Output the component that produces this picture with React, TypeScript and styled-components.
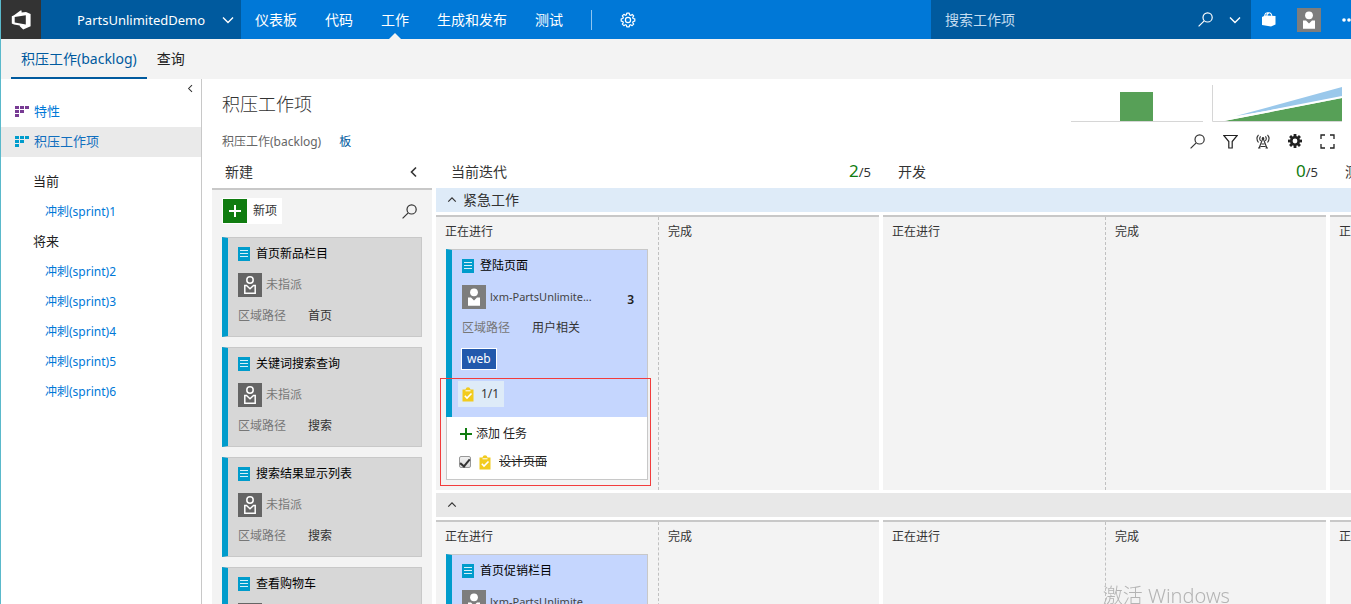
import React from 'react';
import styled, { createGlobalStyle } from 'styled-components';

const GlobalStyle = createGlobalStyle`
  * { box-sizing: border-box; }
  body {
    margin: 0;
    overflow: hidden;
    background: #fff;
    color: #333;
    font-family: "Noto Sans", "Noto Sans CJK SC", sans-serif;
    font-size: 12px;
    line-height: 16px;
  }
  button, input { font: inherit; color: inherit; }
  button { border: 0; padding: 0; background: none; cursor: pointer; text-align: left; }
  a { color: inherit; text-decoration: none; }
  h1, h2, h3, p, ul { margin: 0; padding: 0; font-weight: 400; font-size: inherit; }
  ul { list-style: none; }
  svg { display: block; flex: none; }
`;

const Page = styled.div`
  display: flex;
  flex-direction: column;
  height: 100vh;
  overflow: hidden;
  border-left: 1px solid #5ab9cb;
`;

/* ---------- top bar ---------- */

const TopBar = styled.header`
  display: flex;
  flex: none;
  height: 39px;
  background: #0078d7;
  color: #fff;
  font-size: 14px;
`;

const Logo = styled.a`
  display: flex;
  align-items: center;
  justify-content: center;
  width: 40px;
  background: #333;
`;

const ProjectButton = styled.button`
  display: flex;
  align-items: center;
  justify-content: space-between;
  width: 200px;
  padding: 0 7px 0 36px;
  background: #005a9e;
  font-size: 13px;
`;

const TopNav = styled.nav`
  display: flex;
  flex: 1;
  align-items: center;
`;

const TopLink = styled.a<{ $active?: boolean }>`
  position: relative;
  display: flex;
  align-items: center;
  height: 39px;
  padding: 0 14px;
  white-space: nowrap;
  &::after {
    content: "";
    display: ${p => (p.$active ? 'block' : 'none')};
    position: absolute;
    left: calc(50% - 6px);
    bottom: 0;
    border: 6px solid transparent;
    border-top: 0;
    border-bottom-color: #f3f3f3;
  }
`;

const Separator = styled.span`
  width: 1px;
  height: 20px;
  margin: 0 28px 0 14px;
  background: #8fc5f0;
`;

const SearchBox = styled.form`
  display: flex;
  align-items: center;
  gap: 16px;
  width: 320px;
  padding: 0 10px 0 14px;
  background: #005a9e;
`;

const SearchInput = styled.input`
  flex: 1;
  min-width: 0;
  padding: 0;
  border: 0;
  outline: 0;
  background: none;
  &::placeholder { color: #c3dcf0; opacity: 1; }
`;

const Account = styled.div`
  display: flex;
  align-items: center;
  gap: 21px;
  width: 100px;
  padding-left: 11px;
  overflow: hidden;
`;

/* ---------- hub tabs ---------- */

const HubBar = styled.nav`
  display: flex;
  flex: none;
  height: 40px;
  padding-left: 10px;
  background: #f3f3f3;
  font-size: 14px;
`;

const HubTab = styled.a<{ $active?: boolean }>`
  display: flex;
  align-items: center;
  padding: 2px 10px 0;
  border-bottom: 2px solid ${p => (p.$active ? '#005a9e' : 'transparent')};
  color: ${p => (p.$active ? '#005a9e' : '#222')};
`;

const Body = styled.div`
  display: flex;
  flex: 1;
  min-height: 0;
`;

/* ---------- sidebar ---------- */

const Sidebar = styled.aside`
  flex: none;
  width: 201px;
  border-right: 1px solid #c8c8c8;
  font-size: 13px;
`;

const CollapseRow = styled.div`
  display: flex;
  align-items: flex-start;
  justify-content: flex-end;
  height: 18px;
  padding: 5px 6px 0;
`;

const BacklogLink = styled.a<{ $active?: boolean }>`
  display: flex;
  align-items: center;
  gap: 4px;
  height: 30px;
  padding: 0 0 2px 14px;
  background: ${p => (p.$active ? '#eaeaea' : 'none')};
  color: ${p => (p.$active ? '#106ebe' : '#0078d7')};
`;

const SprintTree = styled.ul`
  padding-top: 9px;
`;

const TreeItem = styled.li<{ $level: number }>`
  height: 30px;
  padding-top: ${p => (p.$level ? 1 : 0)}px;
  padding-left: ${p => (p.$level ? 44 : 32)}px;
  color: ${p => (p.$level ? '#0078d7' : '#222')};
  font-size: ${p => (p.$level ? 12 : 13)}px;
  line-height: 30px;
`;

/* ---------- page head ---------- */

const Main = styled.main`
  display: flex;
  flex: 1;
  flex-direction: column;
  min-width: 0;
`;

const TitleRow = styled.div`
  display: flex;
  flex: none;
  align-items: center;
  gap: 9px;
  height: 49px;
  padding: 0 9px 0 20px;
`;

const Title = styled.h1`
  flex: 1;
  font-weight: 300;
  font-size: 18px;
  line-height: 24px;
`;

const ViewRow = styled.div`
  display: flex;
  flex: none;
  align-items: center;
  justify-content: space-between;
  height: 30px;
  padding: 0 16px 4px 20px;
`;

const Group = styled.div<{ $gap: number }>`
  display: flex;
  align-items: center;
  gap: ${p => p.$gap}px;
`;

const ViewLink = styled.a<{ $active?: boolean }>`
  padding-top: 2px;
  color: ${p => (p.$active ? '#005a9e' : '#666')};
`;

/* ---------- board ---------- */

const Board = styled.div`
  display: flex;
  flex: 1;
  gap: 4px;
  min-height: 0;
  padding-left: 10px;
  overflow: hidden;
`;

const NewColumn = styled.section`
  display: flex;
  flex: none;
  flex-direction: column;
  width: 220px;
`;

const Stages = styled.div`
  flex: 1;
  min-width: 0;
  overflow: hidden;
`;

const Track = styled.div`
  display: flex;
  gap: 4px;
`;

const StageHead = styled.div`
  display: flex;
  flex: 0 0 443px;
  align-items: center;
  justify-content: space-between;
  height: 30px;
  padding: 0 8px 3px 15px;
  font-size: 14px;
`;

const NewHead = styled.div`
  display: flex;
  flex: none;
  align-items: center;
  justify-content: space-between;
  height: 32px;
  padding: 0 12px 3px 13px;
  border-bottom: 2px solid #c8c8c8;
  font-size: 14px;
`;

const Count = styled.span`
  font-size: 13px;
`;

const CountNow = styled.span`
  color: #107c10;
  font-size: 17px;
`;

const NewBody = styled.div`
  display: flex;
  flex: 1;
  flex-direction: column;
  gap: 10px;
  min-height: 0;
  padding: 8px 10px;
  overflow: hidden;
  background: #f3f3f3;
`;

const NewTools = styled.div`
  display: flex;
  align-items: center;
  justify-content: space-between;
  padding: 0 5px 3px 0;
`;

const NewItem = styled.button`
  display: flex;
  align-items: center;
  gap: 6px;
  height: 26px;
  padding: 1px 5px 1px 1px;
  background: #fff;
`;

const PlusTile = styled.span`
  display: flex;
  align-items: center;
  justify-content: center;
  width: 24px;
  height: 24px;
  background: #107c10;
`;

const LaneHead = styled.button<{ $urgent?: boolean }>`
  display: flex;
  align-items: center;
  gap: 6px;
  width: 100%;
  height: 24px;
  margin-bottom: 3px;
  padding-left: 11px;
  background: ${p => (p.$urgent ? '#deebf8' : '#e8e8e8')};
  font-size: 14px;
`;

const LaneRow = styled(Track)`
  margin-bottom: 3px;
`;

const Cell = styled.div`
  display: grid;
  flex: 0 0 443px;
  grid-template-columns: 222px 1fr;
  border-top: 2px solid #c8c8c8;
  background: #f3f3f3;
`;

const SubColumn = styled.div<{ $split?: boolean }>`
  min-width: 0;
  padding: 0 9px 10px;
  border-left: ${p => (p.$split ? '1px dashed #c0c0c0' : '0')};
`;

const SubTitle = styled.h3`
  height: 32px;
  padding-top: 7px;
`;

/* ---------- cards ---------- */

const CardFrame = styled.article<{ $wide?: boolean }>`
  flex: none;
  position: relative;
  width: ${p => (p.$wide ? '202px' : '100%')};
  margin-left: ${p => (p.$wide ? 1 : 0)}px;
`;

const CardBody = styled.div<{ $blue?: boolean; $open?: boolean }>`
  display: flex;
  flex-direction: column;
  align-items: stretch;
  gap: 11px;
  padding: 8px 10px ${p => (p.$blue ? 10 : 12)}px;
  border: 1px solid #c8c8c8;
  border-left: 6px solid #009ccc;
  border-bottom-width: ${p => (p.$open ? 0 : 1)}px;
  background: ${p => (p.$blue ? '#c5d6fe' : '#d7d7d7')};
`;

const CardTitle = styled.a`
  display: flex;
  align-items: center;
  gap: 6px;
  color: #000;
`;

const Assignee = styled.div<{ $muted?: boolean }>`
  display: flex;
  align-items: center;
  gap: 4px;
  height: 24px;
  color: ${p => (p.$muted ? '#777' : '#444')};
`;

const AssigneeName = styled.span`
  flex: 1;
  font-size: 11px;
`;

const MutedName = styled.span`
  flex: 1;
`;

const Effort = styled.span`
  padding: 5px 3px 0 0;
  color: #222;
  font-weight: 600;
`;

const Field = styled.div`
  display: grid;
  grid-template-columns: 70px 1fr;
`;

const FieldName = styled.span`
  color: #777;
`;

const Tag = styled.span`
  align-self: flex-start;
  height: 22px;
  margin: 1px 0 0 -1px;
  padding: 2px 5px;
  border: 1px solid #fff;
  background: #2259ac;
  color: #fff;
`;

const TaskBadge = styled.button`
  display: flex;
  align-items: center;
  align-self: flex-start;
  gap: 7px;
  height: 26px;
  margin-left: -4px;
  padding: 0 5px 0 4px;
  background: #deebf8;
`;

const TaskPanel = styled.div`
  display: flex;
  flex-direction: column;
  gap: 12px;
  padding: 9px 12px 9px 12px;
  border: 1px solid #c8c8c8;
  border-top: 0;
  background: #fff;
  color: #222;
`;

const AddTask = styled.button`
  display: flex;
  align-items: center;
  gap: 3px;
`;

const TaskLine = styled.label`
  display: flex;
  align-items: center;
  gap: 8px;
`;

const TaskName = styled.span`
  text-decoration: line-through;
`;

const Check = styled.input`
  appearance: none;
  display: flex;
  justify-content: center;
  width: 12px;
  height: 12px;
  margin: 0;
  border: 1px solid #999;
  border-radius: 2px;
  background: linear-gradient(#f0f0f0, #dcdcdc);
  &:checked::before {
    content: "";
    width: 4px;
    height: 8px;
    border: solid #333;
    border-width: 0 2px 2px 0;
    transform: rotate(40deg);
  }
`;

const Highlight = styled.div`
  position: absolute;
  left: -6px;
  right: -3px;
  top: 129px;
  bottom: -6px;
  border: 1px solid #f23c3c;
  pointer-events: none;
`;

const Watermark = styled.div`
  position: fixed;
  right: 121px;
  bottom: -6px;
  color: #b4b4b4;
  font-weight: 300;
  font-size: 20px;
  line-height: 28px;
  pointer-events: none;
`;

/* ---------- icons ---------- */

type Dir = 'down' | 'up' | 'left';

const Chevron = ({ dir, size = 12, width = 1.4 }: { dir: Dir; size?: number; width?: number }) => {
  const d = { down: 'M1 3.5L6 8.5L11 3.5', up: 'M1.5 8L6 3.5L10.5 8', left: 'M8 1.5L3.5 6L8 10.5' }[dir];
  return (
    <svg width={size} height={size} viewBox="0 0 12 12" fill="none" stroke="currentColor" strokeWidth={width}>
      <path d={d} />
    </svg>
  );
};

const SearchIcon = ({ size = 15 }: { size?: number }) => (
  <svg width={size} height={size} viewBox="0 0 15 15" fill="none" stroke="currentColor" strokeWidth="1.2">
    <circle cx="9.6" cy="5.4" r="4.6" />
    <path d="M6.2 8.8L.6 14.4" />
  </svg>
);

const LogoIcon = () => (
  <svg width="20" height="20" viewBox="0 0 20 20">
    <path
      fill="#fff"
      fillRule="evenodd"
      d="M.8 6.3L3 5.2L9.5.6H10.6V2.6L15 2L19.6 4V16.2L12.2 19.4L8.8 16.2V15.6L3 14.4L.8 13.6ZM3.7 7V12.6L14.8 14.6V5.2Z"
    />
  </svg>
);

const gearTeeth = [0, 45, 90, 135, 180, 225, 270, 315];

const GearOutline = () => (
  <svg width="16" height="16" viewBox="0 0 16 16" fill="none" stroke="#fff" strokeWidth="1.2">
    <path
      strokeLinejoin="round"
      d="M6.8 1.2H9.2L9.6 2.9L10.7 3.4L12.2 2.4L13.7 4L12.7 5.4L13.1 6.5L14.8 6.9V9.1L13.1 9.5L12.7 10.6L13.7 12.1L12.1 13.7L10.6 12.7L9.6 13.1L9.2 14.8H6.8L6.4 13.1L5.4 12.7L3.9 13.7L2.3 12.1L3.3 10.6L2.9 9.5L1.2 9.1V6.9L2.9 6.5L3.3 5.4L2.3 3.9L3.9 2.3L5.4 3.3L6.4 2.9Z"
    />
    <circle cx="8" cy="8" r="2.6" />
  </svg>
);

const GearSolid = () => (
  <svg width="14" height="14" viewBox="0 0 14 14">
    <circle cx="7" cy="7" r="3.7" fill="none" stroke="#222" strokeWidth="2.6" />
    {gearTeeth.map(a => (
      <rect key={a} x="5.6" y="0" width="2.8" height="3" fill="#222" transform={`rotate(${a} 7 7)`} />
    ))}
  </svg>
);

const BagIcon = () => (
  <svg width="14" height="15" viewBox="0 0 14 15">
    <path fill="#fff" d="M0 5L3 3.5L13.5 4V12.5L9 14.6L0 13Z" />
    <path fill="none" stroke="#fff" strokeWidth="1.1" d="M2.8 5V3Q3.2 1 5.4 .8H7Q9.6 1 10 4.5M5 4V2.6Q5.6 1.6 6.8 1.4" />
  </svg>
);

const Avatar = () => (
  <svg width="24" height="24" viewBox="0 0 24 24">
    <rect width="24" height="24" fill="#7d7d7d" />
    <circle cx="12" cy="7.3" r="3.9" fill="#fff" />
    <path fill="#fff" d="M6 12.5H9L12 15.5L15 12.5H18V20.7H6Z" />
  </svg>
);

const EmptyAvatar = () => (
  <svg width="24" height="24" viewBox="0 0 24 24">
    <rect width="24" height="24" fill="#656565" />
    <circle cx="12" cy="7" r="3.2" fill="none" stroke="#fff" strokeWidth="1.5" />
    <path fill="none" stroke="#fff" strokeWidth="1.5" d="M6.8 12.5V20.2H17.2V12.5H15.5L12 15.8L8.5 12.5Z" />
  </svg>
);

const MoreIcon = () => (
  <svg width="14" height="4" viewBox="0 0 14 4" fill="#fff">
    <circle cx="2" cy="2" r="1.8" />
    <circle cx="7" cy="2" r="1.8" />
    <circle cx="12" cy="2" r="1.8" />
  </svg>
);

const GridIcon = ({ color }: { color: string }) => (
  <svg width="15" height="11" viewBox="0 0 15 11" fill={color}>
    <path d="M0 0H4V3H0ZM5 0H9V3H5ZM10 0H14V3H10ZM0 4H4V7H0ZM5 4H9V7H5ZM0 8H4V11H0Z" />
  </svg>
);

const StoryIcon = () => (
  <svg width="12" height="14" viewBox="0 0 12 14">
    <rect width="12" height="14" fill="#009ccc" />
    <path stroke="#d8f0f8" d="M2 3.5H10M2 6.5H10M2 9.5H10" />
  </svg>
);

const TaskIcon = () => (
  <svg width="12" height="15" viewBox="0 0 12 15">
    <path fill="#f2cb1d" d="M.5 2.5H3.5Q4 .3 6 .3T8.5 2.5H11.5V14.5H.5Z" />
    <path stroke="#fff" fill="none" d="M3.5 3.8H8.5" />
    <path stroke="#fff" strokeWidth="1.6" fill="none" d="M2.8 8.8L5 11L9.5 6.5" />
  </svg>
);

const Plus = ({ color }: { color: string }) => (
  <svg width="14" height="14" viewBox="0 0 14 14" stroke={color} strokeWidth="2">
    <path d="M7 1V13M1 7H13" />
  </svg>
);

const FilterIcon = () => (
  <svg width="15" height="15" viewBox="0 0 15 15" fill="none" stroke="#222" strokeWidth="1.2">
    <path d="M.8 1.5H14.2L9.2 7.5V14H5.8V7.5Z" />
  </svg>
);

const AntennaIcon = () => (
  <svg width="14" height="15" viewBox="0 0 14 15" fill="none" stroke="#333" strokeWidth="1.1">
    <path d="M2.5 .8Q-.6 4.5 2.5 8.5M11.5 .8Q14.6 4.5 11.5 8.5M4.6 2.3Q2.8 4.5 4.6 7M9.4 2.3Q11.2 4.5 9.4 7" />
    <path d="M6.6 5L3 14.2M7.4 5L11 14.2M5.500 10H8.500M4.500 12.500H9.500M2 14H4.500M9.500 14H12" />
    <circle cx="7" cy="4.3" r="1.2" fill="#333" stroke="none" />
  </svg>
);

const FullscreenIcon = () => (
  <svg width="15" height="15" viewBox="0 0 15 15" fill="none" stroke="#222" strokeWidth="1.3">
    <path d="M1 5V1H5M10 1H14V5M14 10V14H10M5 14H1V10" />
  </svg>
);

/* ---------- content ---------- */

const topLinks = ['仪表板', '代码', '工作', '生成和发布', '测试'];
const stages = [
  { name: '当前迭代', now: 2 },
  { name: '开发', now: 0 },
  { name: '测试', now: 0 },
];
const tree = [
  { text: '当前', level: 0 },
  { text: '冲刺(sprint)1', level: 1 },
  { text: '将来', level: 0 },
  { text: '冲刺(sprint)2', level: 1 },
  { text: '冲刺(sprint)3', level: 1 },
  { text: '冲刺(sprint)4', level: 1 },
  { text: '冲刺(sprint)5', level: 1 },
  { text: '冲刺(sprint)6', level: 1 },
];
const newCards = [
  ['首页新品栏目', '首页'],
  ['关键词搜索查询', '搜索'],
  ['搜索结果显示列表', '搜索'],
  ['查看购物车', '购物车'],
];

const AreaPath = ({ value }: { value: string }) => (
  <Field>
    <FieldName>区域路径</FieldName>
    <span>{value}</span>
  </Field>
);

const NewCard = ({ title, area }: { title: string; area: string }) => (
  <CardFrame>
    <CardBody>
      <CardTitle href="#"><StoryIcon />{title}</CardTitle>
      <Assignee $muted><EmptyAvatar /><MutedName>未指派</MutedName></Assignee>
      <AreaPath value={area} />
    </CardBody>
  </CardFrame>
);

const ActiveCardTop = ({ title, effort }: { title: string; effort?: number }) => (
  <>
    <CardTitle href="#"><StoryIcon />{title}</CardTitle>
    <Assignee>
      <Avatar />
      <AssigneeName>lxm-PartsUnlimite...</AssigneeName>
      {effort !== undefined && <Effort>{effort}</Effort>}
    </Assignee>
  </>
);

const UrgentCard = () => (
  <CardFrame $wide>
    <CardBody $blue $open>
      <ActiveCardTop title="登陆页面" effort={3} />
      <AreaPath value="用户相关" />
      <Tag>web</Tag>
      <TaskBadge><TaskIcon />1/1</TaskBadge>
    </CardBody>
    <TaskPanel>
      <AddTask><Plus color="#107c10" />添加 任务</AddTask>
      <TaskLine>
        <Check type="checkbox" defaultChecked />
        <TaskIcon />
        <TaskName>设计页面</TaskName>
      </TaskLine>
    </TaskPanel>
    <Highlight />
  </CardFrame>
);

const Lane = ({ children }: { children: React.ReactNode }) => (
  <LaneRow>
    {stages.map((s, i) => (
      <Cell key={s.name}>
        <SubColumn>
          <SubTitle>正在进行</SubTitle>
          {i === 0 && children}
        </SubColumn>
        <SubColumn $split>
          <SubTitle>完成</SubTitle>
        </SubColumn>
      </Cell>
    ))}
  </LaneRow>
);

export default function App() {
  return (
    <Page>
      <GlobalStyle />
      <TopBar>
        <Logo href="#" aria-label="Team Services"><LogoIcon /></Logo>
        <ProjectButton>PartsUnlimitedDemo<Chevron dir="down" /></ProjectButton>
        <TopNav>
          {topLinks.map(t => (
            <TopLink key={t} href="#" $active={t === '工作'}>{t}</TopLink>
          ))}
          <Separator />
          <button aria-label="设置"><GearOutline /></button>
        </TopNav>
        <SearchBox>
          <SearchInput aria-label="搜索工作项" placeholder="搜索工作项" />
          <SearchIcon />
          <Chevron dir="down" />
        </SearchBox>
        <Account>
          <BagIcon />
          <Avatar />
          <MoreIcon />
        </Account>
      </TopBar>

      <HubBar>
        <HubTab href="#" $active>积压工作(backlog)</HubTab>
        <HubTab href="#">查询</HubTab>
      </HubBar>

      <Body>
        <Sidebar>
          <CollapseRow>
            <button aria-label="折叠"><Chevron dir="left" size={9} /></button>
          </CollapseRow>
          <BacklogLink href="#"><GridIcon color="#773b93" />特性</BacklogLink>
          <BacklogLink href="#" $active><GridIcon color="#009ccc" />积压工作项</BacklogLink>
          <SprintTree>
            {tree.map(n => (
              <TreeItem key={n.text} $level={n.level}>
                {n.level ? <a href="#">{n.text}</a> : n.text}
              </TreeItem>
            ))}
          </SprintTree>
        </Sidebar>

        <Main>
          <TitleRow>
            <Title>积压工作项</Title>
            <svg width="132" height="37" viewBox="0 0 132 37">
              <rect x="49" y="7" width="33" height="29" fill="#57a057" />
              <path d="M0 36.5H132" stroke="#d6d6d6" />
            </svg>
            <svg width="130" height="37" viewBox="0 0 130 37">
              <path d="M24 31L130 2V13Z" fill="#9ac8eb" />
              <path d="M12 36L130 13V36Z" fill="#57a057" />
              <path d="M12 35L130 12" stroke="#fff" strokeWidth="2" />
              <path d="M.5 0V36.5H130" fill="none" stroke="#d6d6d6" />
            </svg>
          </TitleRow>
          <ViewRow>
            <Group $gap={18}>
              <ViewLink href="#">积压工作(backlog)</ViewLink>
              <ViewLink href="#" $active>板</ViewLink>
            </Group>
            <Group $gap={18}>
              <button aria-label="搜索"><SearchIcon /></button>
              <button aria-label="筛选"><FilterIcon /></button>
              <button aria-label="实时更新"><AntennaIcon /></button>
              <button aria-label="设置"><GearSolid /></button>
              <button aria-label="全屏"><FullscreenIcon /></button>
            </Group>
          </ViewRow>

          <Board>
            <NewColumn>
              <NewHead>
                <h2>新建</h2>
                <button aria-label="折叠列"><Chevron dir="left" size={12} width={1.6} /></button>
              </NewHead>
              <NewBody>
                <NewTools>
                  <NewItem><PlusTile><Plus color="#fff" /></PlusTile>新项</NewItem>
                  <button aria-label="搜索列"><SearchIcon /></button>
                </NewTools>
                {newCards.map(([title, area]) => (
                  <NewCard key={title} title={title} area={area} />
                ))}
              </NewBody>
            </NewColumn>

            <Stages>
              <Track>
                {stages.map(s => (
                  <StageHead key={s.name}>
                    <h2>{s.name}</h2>
                    <Count><CountNow>{s.now}</CountNow>/5</Count>
                  </StageHead>
                ))}
              </Track>
              <LaneHead $urgent><Chevron dir="up" size={10} />紧急工作</LaneHead>
              <Lane><UrgentCard /></Lane>
              <LaneHead aria-label="默认泳道"><Chevron dir="up" size={10} /></LaneHead>
              <Lane>
                <CardFrame $wide>
                  <CardBody $blue>
                    <ActiveCardTop title="首页促销栏目" />
                    <AreaPath value="首页" />
                  </CardBody>
                </CardFrame>
              </Lane>
            </Stages>
          </Board>
        </Main>
      </Body>
      <Watermark>激活 Windows</Watermark>
    </Page>
  );
}
